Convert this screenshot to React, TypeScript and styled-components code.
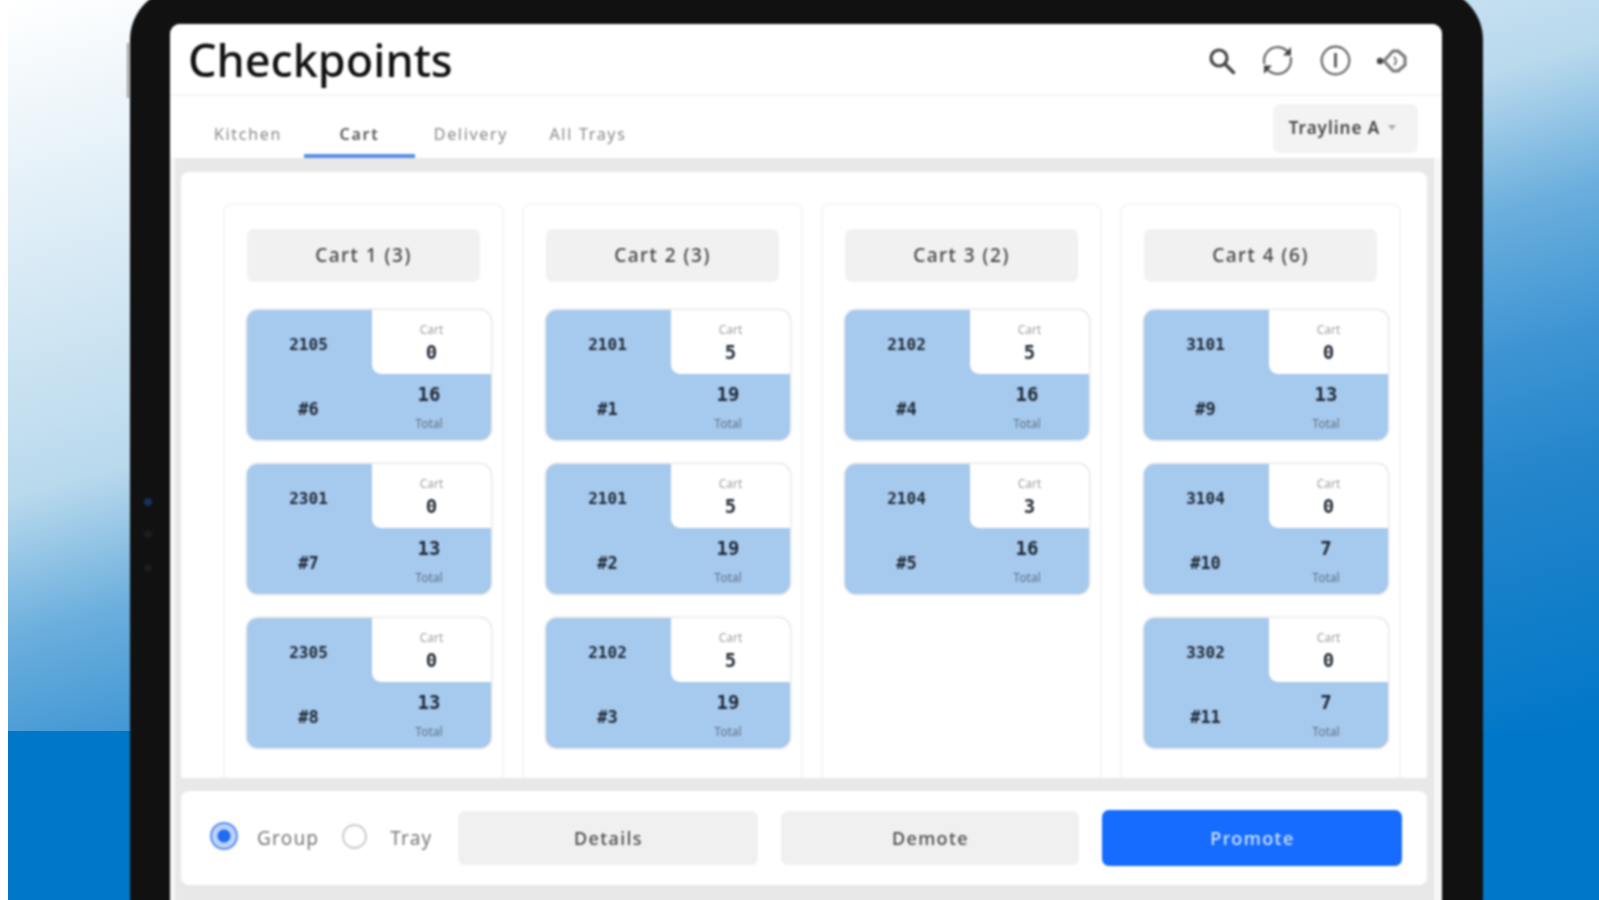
import React from 'react';
import styled, { createGlobalStyle } from 'styled-components';

const Global = createGlobalStyle`
  html, body { margin: 0; padding: 0; background: #fff; overflow: hidden; }
  body { font-family: "Noto Sans", "Open Sans", sans-serif; }
`;

const Stage = styled.div`
  margin-left: 8px;
  height: 900px;
  overflow: hidden;
  padding-left: 122px;
  box-sizing: border-box;
  background-color: #0077c8;
  background-image: linear-gradient(164deg, #ffffff 0%, #b9d9ed 42%, #6aaedd 54%, #3d94d3 66%, #2485cb 77%, #0077c8 100%);
  background-size: 100% 731px;
  background-repeat: no-repeat;
`;

const Device = styled.div`
  position: relative;
  width: 1353px;
  height: 960px;
  margin-top: -12px;
  box-sizing: border-box;
  padding: 36px 41px 0 40px;
  background: #111;
  border-radius: 52px;
  filter: blur(1px);
`;

const SideKey = styled.span`
  position: absolute;
  left: -3px;
  top: 55px;
  width: 2px;
  height: 55px;
  background: #999;
`;

const BezelDot = styled.span<{ $top: number; $color: string }>`
  position: absolute;
  left: 14px;
  top: ${p => p.$top}px;
  width: 8px;
  height: 8px;
  border-radius: 50%;
  background: ${p => p.$color};
`;

const Screen = styled.div`
  height: 924px;
  background: #f7f7f7;
  border-radius: 10px 10px 0 0;
  overflow: hidden;
  display: flex;
  flex-direction: column;
`;

const Header = styled.header`
  height: 72px;
  flex: none;
  box-sizing: border-box;
  background: #fff;
  border-bottom: 2px solid #f5f5f5;
  padding: 0 34px 0 18px;
  display: flex;
  align-items: center;
  justify-content: space-between;
`;

const Title = styled.h1`
  margin: 0;
  font-size: 45px;
  font-weight: 500;
  color: #111;
  letter-spacing: 0;
`;

const Icons = styled.div`
  display: flex;
  align-items: center;
  gap: 25.5px;
  padding-top: 3px;
`;

const TabBar = styled.nav`
  height: 62px;
  flex: none;
  box-sizing: border-box;
  background: #fff;
  padding-left: 22px;
  padding-right: 24px;
  display: flex;
  align-items: flex-end;
`;

const Tab = styled.div<{ $active?: boolean; $w: number }>`
  width: ${p => p.$w}px;
  height: 61px;
  box-sizing: border-box;
  display: flex;
  align-items: center;
  justify-content: center;
  padding-top: 16px;
  font-size: 16px;
  letter-spacing: 1.7px;
  font-weight: ${p => (p.$active ? 600 : 400)};
  color: ${p => (p.$active ? '#555' : '#888')};
  border-bottom: 4px solid ${p => (p.$active ? '#5a8fe8' : 'transparent')};
`;

const Dropdown = styled.div`
  margin-left: auto;
  align-self: flex-start;
  margin-top: 8px;
  width: 145px;
  height: 49px;
  box-sizing: border-box;
  padding: 0 6px 2px 0;
  border-radius: 7px;
  background: #f3f3f3;
  display: flex;
  align-items: center;
  justify-content: center;
  gap: 8px;
  font-size: 17px;
  font-weight: 600;
  letter-spacing: 1px;
  color: #444;
`;

const Caret = styled.span`
  width: 0;
  height: 0;
  border-left: 4px solid transparent;
  border-right: 4px solid transparent;
  border-top: 5px solid #aaa;
`;

const Body = styled.main`
  flex: 1;
  margin: 0 8px 0 5px;
  padding: 14px 7px 0 6px;
  background: #e8e8e8;
  display: flex;
  flex-direction: column;
  gap: 13px;
`;

const Board = styled.section`
  height: 606px;
  flex: none;
  box-sizing: border-box;
  background: #fff;
  border-radius: 8px 8px 0 0;
  padding: 31px 0 0 42px;
  display: grid;
  grid-template-columns: repeat(4, 281px);
  column-gap: 18px;
  overflow: hidden;
`;

const Column = styled.div`
  box-sizing: border-box;
  border: 2px solid #f5f5f5;
  border-bottom: none;
  border-radius: 9px 9px 0 0;
  padding: 24px 0 0 22px;
  display: flex;
  flex-direction: column;
  gap: 24px;
`;

const ColumnHead = styled.div`
  width: 233px;
  height: 53px;
  flex: none;
  box-sizing: border-box;
  padding-bottom: 2px;
  margin-bottom: 4px;
  border-radius: 7px;
  background: #f1f1f1;
  display: flex;
  align-items: center;
  justify-content: center;
  font-size: 19px;
  font-weight: 500;
  letter-spacing: 1.5px;
  color: #444;
`;

const Tray = styled.div`
  width: 244px;
  height: 130px;
  flex: none;
  box-sizing: border-box;
  background: #a6c9ee;
  border-radius: 11px;
  box-shadow: 0 0 0 1.5px #e9e9e9;
  overflow: hidden;
  display: grid;
  grid-template-columns: 125px 119px;
  grid-template-rows: 64px 66px;
`;

const Mono = styled.div<{ $size: number; $bold?: boolean }>`
  font-family: "DejaVu Sans Mono", "Liberation Mono", monospace;
  font-size: ${p => p.$size}px;
  font-weight: ${p => (p.$bold ? 700 : 400)};
  color: #1e2833;
  line-height: 1;
`;

const LeftCell = styled.div<{ $shift: number }>`
  display: flex;
  align-items: center;
  justify-content: center;
  padding-top: ${p => p.$shift}px;
  padding-right: 2px;
  box-sizing: border-box;
`;

const CartCell = styled.div`
  background: #fff;
  border-radius: 0 0 0 9px;
  display: flex;
  flex-direction: column;
  align-items: center;
  padding-top: 12px;
  box-sizing: border-box;
`;

const TotalCell = styled.div`
  display: flex;
  flex-direction: column;
  align-items: center;
  padding-top: 11px;
  box-sizing: border-box;
  padding-right: 5px;
`;

const Tiny = styled.div<{ $dim?: boolean }>`
  font-size: 12px;
  line-height: 16px;
  color: ${p => (p.$dim ? '#607386' : '#a0a0a0')};
`;

const CartValue = styled(Mono)`
  margin-top: 5px;
`;

const TotalLabel = styled(Tiny)`
  margin-top: 12px;
`;

const Footer = styled.section`
  height: 94px;
  flex: none;
  box-sizing: border-box;
  background: #fff;
  border-radius: 8px;
  padding: 0 25px 0 29px;
  display: flex;
  align-items: center;
`;

const Radio = styled.span<{ $on?: boolean }>`
  width: ${p => (p.$on ? 28 : 25)}px;
  height: ${p => (p.$on ? 28 : 25)}px;
  flex: none;
  box-sizing: border-box;
  margin-bottom: 4px;
  border-radius: 50%;
  border: 2px solid ${p => (p.$on ? '#5b8ff0' : '#ccc')};
  background: ${p => (p.$on ? 'radial-gradient(circle, #1f6cf0 0 6px, #bcd2fa 7px)' : '#fff')};
`;

const RadioLabel = styled.span<{ $gap: number; $after: number }>`
  font-size: 19px;
  letter-spacing: 1.2px;
  color: #777;
  margin-left: ${p => p.$gap}px;
  margin-right: ${p => p.$after}px;
`;

const ActionRow = styled.div`
  flex: 1;
  display: grid;
  grid-template-columns: 300px 298px 300px;
  column-gap: 23px;
  align-items: center;
`;

const Action = styled.button<{ $primary?: boolean }>`
  height: ${p => (p.$primary ? 56 : 54)}px;
  border: none;
  border-radius: 7px;
  background: ${p => (p.$primary ? '#166cff' : '#f0f0f0')};
  color: ${p => (p.$primary ? '#d4e3ff' : '#4a4a4a')};
  font-family: inherit;
  font-size: 18px;
  font-weight: 500;
  letter-spacing: 1.4px;
`;

const SearchIcon = () => (
  <svg width="28" height="28" viewBox="0 0 28 28" fill="none" stroke="#444">
    <circle cx="11" cy="11" r="8" strokeWidth="3.2" />
    <path d="M17 17 L25.5 25.5" strokeWidth="3.4" strokeLinecap="round" />
  </svg>
);

const SyncIcon = () => (
  <svg width="33" height="33" viewBox="0 0 33 33" fill="none" stroke="#666" strokeWidth="2.2">
    <path d="M3.5 20 A13.5 13.5 0 0 1 27 8" />
    <path d="M29.5 13 A13.5 13.5 0 0 1 6 25" />
    <path d="M30 3 V11.5 H22 Z" fill="#444" stroke="none" />
    <path d="M3 30 V21.5 H11 Z" fill="#444" stroke="none" />
  </svg>
);

const InfoIcon = () => (
  <svg width="31" height="31" viewBox="0 0 31 31" fill="none" stroke="#666">
    <circle cx="15.5" cy="15.5" r="13.8" strokeWidth="2.2" />
    <path d="M15.5 8 V22.5" strokeWidth="2.8" stroke="#555" />
  </svg>
);

const SoundIcon = () => (
  <svg width="32" height="28" viewBox="0 0 32 28" fill="none" stroke="#777" strokeWidth="3">
    <circle cx="4" cy="14" r="3.2" fill="#444" stroke="none" />
    <path d="M8 14 L17 4 H22 L29 10 V18 L22 24 H17 Z" strokeLinejoin="round" />
    <path d="M18 10 a5 5 0 0 1 0 8" strokeWidth="2" />
  </svg>
);

type TrayData = { id: string; num: string; cart: string; total: string };

const columns: { title: string; trays: TrayData[] }[] = [
  {
    title: 'Cart 1 (3)',
    trays: [
      { id: '2105', num: '#6', cart: '0', total: '16' },
      { id: '2301', num: '#7', cart: '0', total: '13' },
      { id: '2305', num: '#8', cart: '0', total: '13' },
    ],
  },
  {
    title: 'Cart 2 (3)',
    trays: [
      { id: '2101', num: '#1', cart: '5', total: '19' },
      { id: '2101', num: '#2', cart: '5', total: '19' },
      { id: '2102', num: '#3', cart: '5', total: '19' },
    ],
  },
  {
    title: 'Cart 3 (2)',
    trays: [
      { id: '2102', num: '#4', cart: '5', total: '16' },
      { id: '2104', num: '#5', cart: '3', total: '16' },
    ],
  },
  {
    title: 'Cart 4 (6)',
    trays: [
      { id: '3101', num: '#9', cart: '0', total: '13' },
      { id: '3104', num: '#10', cart: '0', total: '7' },
      { id: '3302', num: '#11', cart: '0', total: '7' },
    ],
  },
];

export default function App() {
  return (
    <>
      <Global />
      <Stage>
        <Device>
          <SideKey />
          <BezelDot $top={510} $color="#14325a" />
          <BezelDot $top={542} $color="#1d1d1d" />
          <BezelDot $top={576} $color="#1d1d1d" />
          <Screen>
            <Header>
              <Title>Checkpoints</Title>
              <Icons>
                <SearchIcon />
                <SyncIcon />
                <InfoIcon />
                <SoundIcon />
              </Icons>
            </Header>
            <TabBar>
              <Tab $w={112}>Kitchen</Tab>
              <Tab $w={111} $active>Cart</Tab>
              <Tab $w={112}>Delivery</Tab>
              <Tab $w={122}>All Trays</Tab>
              <Dropdown>
                Trayline A
                <Caret />
              </Dropdown>
            </TabBar>
            <Body>
              <Board>
                {columns.map(col => (
                  <Column key={col.title}>
                    <ColumnHead>{col.title}</ColumnHead>
                    {col.trays.map(t => (
                      <Tray key={t.num}>
                        <LeftCell $shift={6}>
                          <Mono $size={16} $bold>{t.id}</Mono>
                        </LeftCell>
                        <CartCell>
                          <Tiny>Cart</Tiny>
                          <CartValue $size={19} $bold>{t.cart}</CartValue>
                        </CartCell>
                        <LeftCell $shift={4}>
                          <Mono $size={17} $bold>{t.num}</Mono>
                        </LeftCell>
                        <TotalCell>
                          <Mono $size={19} $bold>{t.total}</Mono>
                          <TotalLabel $dim>Total</TotalLabel>
                        </TotalCell>
                      </Tray>
                    ))}
                  </Column>
                ))}
              </Board>
              <Footer>
                <Radio $on />
                <RadioLabel $gap={19} $after={23}>Group</RadioLabel>
                <Radio />
                <RadioLabel $gap={23} $after={26}>Tray</RadioLabel>
                <ActionRow>
                  <Action>Details</Action>
                  <Action>Demote</Action>
                  <Action $primary>Promote</Action>
                </ActionRow>
              </Footer>
            </Body>
          </Screen>
        </Device>
      </Stage>
    </>
  );
}
